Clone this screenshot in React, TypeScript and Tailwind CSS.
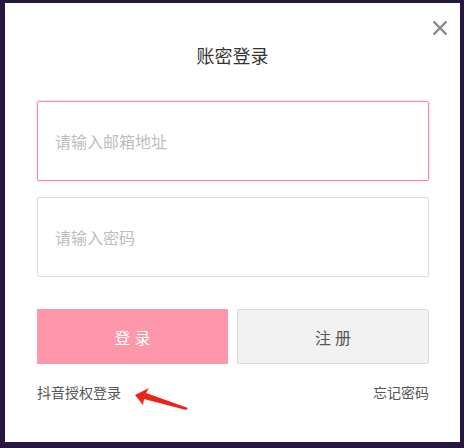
export default function App() {
	return (
		<div className="w-[464px] h-[448px] bg-[#26153f] pt-[3px] pl-[5px] font-['Noto_Sans_CJK_SC',sans-serif]">
			<div className="relative w-[455px] h-[439px] bg-white px-[32px] pt-[40px] flex flex-col">
				<button className="absolute top-[14px] right-[10px] w-[21px] h-[21px] flex items-center justify-center">
					<svg width="16" height="16" viewBox="0 0 16 16">
						<path d="M1.5 1.5 L14.5 14.5 M14.5 1.5 L1.5 14.5" stroke="#8a8a8a" strokeWidth="2.4" />
					</svg>
				</button>
				<h2 className="text-center text-[18px] leading-[24px] text-[#333] font-normal">账密登录</h2>
				<div className="mt-[34px] w-[392px] h-[80px] border border-[#e9909f] shadow-[0_0_3px_#f7c0cb] rounded-[2px] flex items-center px-[17px]">
					<span className="text-[16px] text-[#bdbdbd]">请输入邮箱地址</span>
				</div>
				<div className="mt-[16px] w-[392px] h-[80px] border border-[#dcdcdc] rounded-[2px] flex items-center px-[17px]">
					<span className="text-[16px] text-[#bdbdbd]">请输入密码</span>
				</div>
				<div className="mt-[32px] w-[392px] flex gap-[9px]">
					<div className="w-[191px] h-[55px] bg-[#fe97a9] flex items-center justify-center text-[16px] text-white tracking-[4px] pl-[4px]">
						登录
					</div>
					<div className="flex-1 h-[55px] bg-[#f2f2f2] border border-[#dcdcdc] rounded-[2px] flex items-center justify-center text-[16px] text-[#555] tracking-[4px] pl-[4px]">
						注册
					</div>
				</div>
				<div className="mt-[18px] w-[392px] flex justify-between items-center text-[14px] leading-[20px] text-[#555]">
					<div className="relative">
						<span>抖音授权登录</span>
						<svg className="absolute left-[96px] top-[2px]" width="60" height="30" viewBox="0 0 60 30">
							<path d="M2 11 L16 4 L13 9 L55 24 L53 26 L11 15 L10 21 Z" fill="#ec2318" />
						</svg>
					</div>
					<span>忘记密码</span>
				</div>
			</div>
		</div>
	);
}
